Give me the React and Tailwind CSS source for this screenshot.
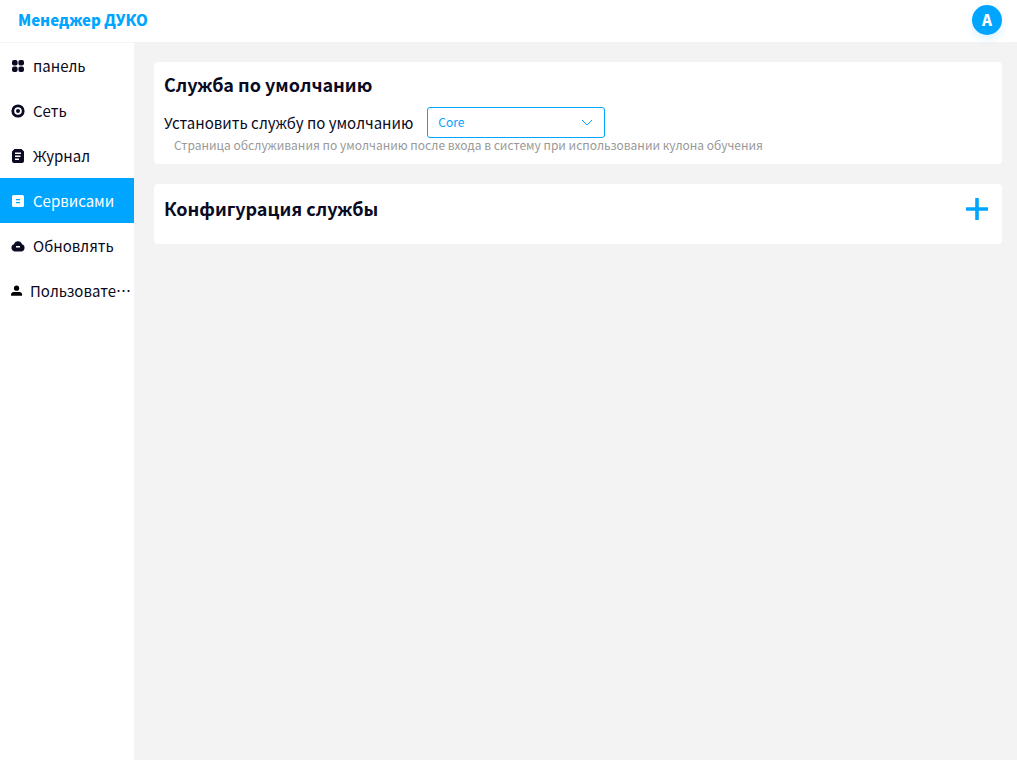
import { useState } from 'react'

const icons = {
  panel: (
    <>
      <rect x="2" y="2" width="5.600" height="5.600" rx="2" />
      <rect x="8.400" y="2" width="5.600" height="5.600" rx="2" />
      <rect x="2" y="8.400" width="5.600" height="5.600" rx="2" />
      <rect x="8.400" y="8.400" width="5.600" height="5.600" rx="2" />
    </>
  ),
  network: (
    <>
      <circle cx="8" cy="8" r="5.200" fill="none" stroke="currentColor" strokeWidth="2.800" />
      <circle cx="8" cy="8" r="2" />
    </>
  ),
  log: (
    <path
      fillRule="evenodd"
      d="M4.500 1h7L14 3.500V13a2 2 0 0 1-2 2H4a2 2 0 0 1-2-2V3.500zM5 4.500V6h6V4.500zM5 7.500V9h5.500V7.500zM5 10.500V12h4v-1.500z"
    />
  ),
  services: (
    <path
      fillRule="evenodd"
      d="M3.500 2h9A1.500 1.500 0 0 1 14 3.500v9a1.500 1.500 0 0 1-1.500 1.500h-9A1.500 1.500 0 0 1 2 12.500v-9A1.500 1.500 0 0 1 3.500 2zM6 6v1.200h4V6zM6 9v1.200h4V9z"
    />
  ),
  update: (
    <path
      fillRule="evenodd"
      d="M4 6.200a4.200 4.200 0 0 1 8 0 3.700 3.700 0 0 1-.8 7.200H4.700A3.700 3.700 0 0 1 4 6.200zM6 8v1.500h4V8z"
    />
  ),
  user: (
    <>
      <circle cx="7.500" cy="4.800" r="3" />
      <path d="M1.200 13.300v-1.300c0-1.800 1.200-2.800 3-2.800h6.600c1.800 0 3 1 3 2.800v1.300z" />
    </>
  )
}

const menu = [
  { id: 'panel', label: 'панель' },
  { id: 'network', label: 'Сеть' },
  { id: 'log', label: 'Журнал' },
  { id: 'services', label: 'Сервисами' },
  { id: 'update', label: 'Обновлять' },
  { id: 'user', label: 'Пользователь' }
]

function MenuItem({ item, active, onSelect }) {
  const isUser = item.id === 'user'
  return (
    <a
      href={'#' + item.id}
      onClick={() => onSelect(item.id)}
      aria-current={active ? 'page' : undefined}
      className={
        'flex h-[45px] items-center pr-0.5 pl-2.5 text-[15px] leading-[22px] ' +
        (isUser ? 'gap-1.5 ' : 'gap-[7px] ') +
        (active ? 'bg-[#00a5ff] text-white' : 'text-[#0a0a23]')
      }
    >
      <svg
        viewBox="0 0 16 16"
        fill="currentColor"
        aria-hidden="true"
        className={isUser ? 'h-3.5 w-3.5 shrink-0 text-black' : 'h-4 w-4 shrink-0'}
      >
        {icons[item.id]}
      </svg>
      <span className="truncate">{item.label}</span>
    </a>
  )
}

export default function App() {
  const [page, setPage] = useState('services')
  const [service, setService] = useState('Core')

  return (
    <div lang="zh-CN" className="flex min-h-screen flex-col bg-[#f3f3f3] font-['Noto_Sans_CJK_SC',sans-serif] text-[#0a0a23]">
      <header className="flex h-[43px] items-center justify-between border-b border-[#f3f3f3] bg-white pr-[15px] pb-0.5 pl-[18px]">
        <h1 className="text-[15px] leading-6 font-black text-[#00a5ff]">Менеджер ДУКО</h1>
        <button
          type="button"
          className="h-[30px] w-[30px] rounded-full bg-[#00a5ff] text-[15px] leading-[22px] font-black text-white shadow-[0_4px_8px_rgba(0,165,255,0.15)]"
        >
          A
        </button>
      </header>

      <div className="flex flex-1">
        <nav className="w-[134px] shrink-0 bg-white">
          {menu.map(item => (
            <MenuItem key={item.id} item={item} active={item.id === page} onSelect={setPage} />
          ))}
        </nav>

        <main className="min-w-0 flex-1 space-y-5 pt-[19px] pr-[15px] pl-5">
          <section className="rounded bg-white px-2.5 pt-2.5 pb-3">
            <h2 className="text-lg leading-6 font-bold">Служба по умолчанию</h2>
            <div className="mt-[11px] flex items-center gap-3.5">
              <label htmlFor="service" className="text-[15px] leading-[22px]">Установить службу по умолчанию</label>
              <div className="relative">
                <select
                  id="service"
                  value={service}
                  onChange={e => setService(e.target.value)}
                  className="block h-[31px] w-[178px] appearance-none rounded-[3px] border border-[#00a5ff] bg-white px-2.5 pb-0.5 text-xs text-[#00a5ff]"
                >
                  <option>Core</option>
                </select>
                <svg
                  viewBox="0 0 12 12"
                  fill="none"
                  stroke="#00a5ff"
                  aria-hidden="true"
                  className="pointer-events-none absolute top-2.5 right-3 h-3 w-3"
                >
                  <path d="M1 3l5 5 5-5" />
                </svg>
              </div>
            </div>
            <p className="pl-2.5 text-xs leading-[14px] text-[#999]">
              Страница обслуживания по умолчанию после входа в систему при использовании кулона обучения
            </p>
          </section>

          <section className="flex h-[60px] items-start justify-between rounded bg-white p-2.5">
            <h2 className="text-lg leading-7 font-bold">Конфигурация службы</h2>
            <button type="button" aria-label="Добавить службу" className="p-1 text-[#00a5ff]">
              <svg viewBox="0 0 22 22" fill="currentColor" className="h-[22px] w-[22px]">
                <rect x="9.200" width="3.600" height="22" rx="0.500" />
                <rect y="9.200" width="22" height="3.600" rx="0.500" />
              </svg>
            </button>
          </section>
        </main>
      </div>
    </div>
  )
}
